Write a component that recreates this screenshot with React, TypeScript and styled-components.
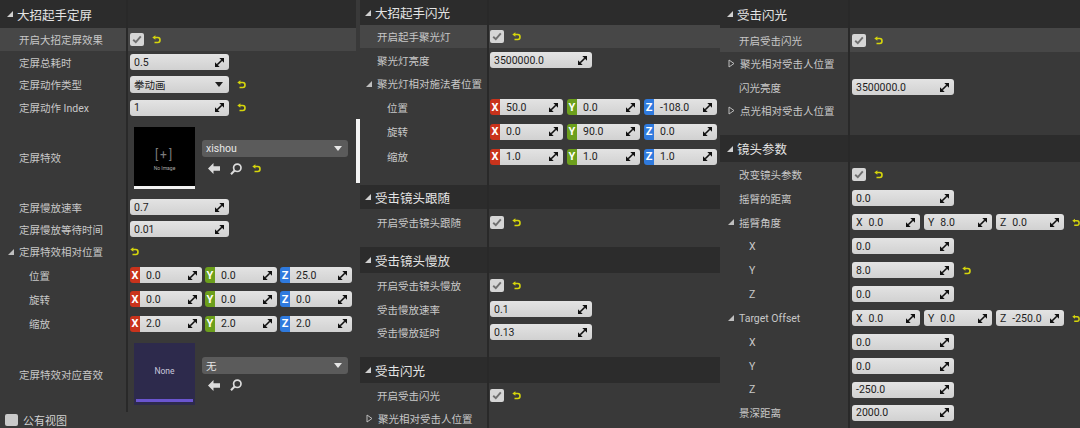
import React from "react";
import styled, { createGlobalStyle } from "styled-components";

const GlobalStyle = createGlobalStyle`
  html, body {
    margin: 0;
    padding: 0;
    background: #393939;
  }
  body {
    font-family: Roboto, "Noto Sans CJK SC", sans-serif;
  }
`;

const AXIS: Record<string, string> = {
  X: "#c9331c",
  Y: "#6c9f1c",
  Z: "#2f7ade",
};

const Screen = styled.div`
  display: flex;
  width: 1080px;
  height: 428px;
  overflow: hidden;
  background: #393939;
`;

const Panel = styled.div<{ $w: number; $lw: number; $lo: number; $ho: number; $vp: number }>`
  --lw: ${p => p.$lw}px;
  --lo: ${p => p.$lo}px;
  --ho: ${p => p.$ho}px;
  --vp: ${p => p.$vp}px;
  display: flex;
  flex-direction: column;
  flex: none;
  width: ${p => p.$w}px;
  height: 428px;
  overflow: hidden;
  background: #393939;
`;

const Divider = styled.div`
  display: flex;
  flex-direction: column;
  flex: none;
  width: 4px;
  background: #393939;
`;

const WhiteStrip = styled.div`
  margin-top: 119px;
  height: 64px;
  background: #f4f4f4;
`;

const Row = styled.div<{ $h: number; $hl?: boolean }>`
  display: grid;
  grid-template-columns: var(--lw) 1fr;
  flex: none;
  height: ${p => p.$h}px;
  background: ${p => (p.$hl ? "#474747" : "transparent")};
`;

const HeadRow = styled(Row)`
  background: #2c2c2c;
`;

const Name = styled.div<{ $nested?: boolean }>`
  display: flex;
  align-items: center;
  min-width: 0;
  padding-left: calc(var(--lo) + ${p => (p.$nested ? 10 : 0)}px);
  font-size: 10.5px;
  color: #c8c8c8;
  white-space: nowrap;
`;

const HeadName = styled(Name)`
  padding-left: var(--ho);
  font-size: 12.5px;
  color: #e4e4e4;
`;

const Twisty = styled.svg`
  flex: none;
  margin-left: -11px;
  margin-right: 5px;
`;

const HeadTwisty = styled(Twisty)`
  margin-left: -10px;
  margin-right: 4px;
`;

const Value = styled.div<{ $gap?: number }>`
  display: flex;
  align-items: center;
  gap: ${p => p.$gap ?? 8}px;
  min-width: 0;
  padding-left: var(--vp);
  border-left: 2px solid #292929;
`;

const NumBox = styled.div<{ $w: number }>`
  display: flex;
  align-items: center;
  justify-content: space-between;
  box-sizing: border-box;
  width: ${p => p.$w}px;
  height: 16px;
  padding: 0 5px 0 4px;
  border-radius: 3px;
  background: linear-gradient(#e3e3e3, #d1d1d1);
  font-size: 10.5px;
  color: #1c1c1c;
`;

const Combo = styled.div<{ $w: number; $dark?: boolean }>`
  display: flex;
  align-items: center;
  justify-content: space-between;
  box-sizing: border-box;
  width: ${p => p.$w}px;
  height: 17px;
  padding: 0 6px 0 4px;
  border-radius: 3px;
  background: ${p => (p.$dark ? "#5b5b5b" : "linear-gradient(#e3e3e3, #cfcfcf)")};
  font-size: 10.5px;
  color: ${p => (p.$dark ? "#e8e8e8" : "#1c1c1c")};
`;

const VecGroup = styled.div<{ $gap: number }>`
  display: flex;
  align-items: center;
  gap: ${p => p.$gap}px;
`;

const AxisPair = styled.div<{ $w: number }>`
  display: flex;
  width: ${p => p.$w}px;
  height: 16px;
`;

const AxisTag = styled.div<{ $c: string }>`
  display: flex;
  align-items: center;
  justify-content: center;
  flex: none;
  width: 10px;
  border-radius: 3px 0 0 3px;
  background: ${p => p.$c};
  color: #ffffff;
  font-size: 11px;
  font-weight: 700;
`;

const AxisBox = styled(NumBox)`
  flex: 1;
  width: auto;
  padding-left: 6px;
  border-radius: 0 3px 3px 0;
`;

const PlainAxisText = styled.span`
  display: flex;
  gap: 6px;
`;

const Check = styled.div<{ $size?: number; $bg?: string }>`
  display: flex;
  align-items: center;
  justify-content: center;
  flex: none;
  width: ${p => p.$size ?? 14}px;
  height: ${p => (p.$size ?? 14) - 1}px;
  border-radius: 2px;
  background: ${p => p.$bg ?? "#d6d6d6"};
`;

const Asset = styled.div`
  display: flex;
  align-items: center;
  gap: 7px;
  padding-left: 4px;
`;

const Thumb = styled.div<{ $bg: string }>`
  display: flex;
  flex-direction: column;
  flex: none;
  width: 61px;
  height: 62px;
  background: ${p => p.$bg};
`;

const ThumbBody = styled.div`
  display: flex;
  flex: 1;
  flex-direction: column;
  align-items: center;
  justify-content: center;
  gap: 3px;
`;

const ThumbBar = styled.div<{ $c: string; $mb: number }>`
  height: 3px;
  margin: 0 ${p => (p.$mb ? 2 : 0)}px ${p => p.$mb}px;
  background: ${p => p.$c};
`;

const PlusMark = styled.span`
  font-size: 12px;
  letter-spacing: 2px;
  color: #7c7c7c;
  margin-top: 6px;
`;

const TinyText = styled.span`
  font-size: 5px;
  color: #a8a8a8;
`;

const NoneText = styled.span`
  font-size: 8.5px;
  color: #c9c8dc;
`;

const AssetSide = styled.div`
  display: flex;
  flex-direction: column;
  gap: 5px;
`;

const AssetTools = styled.div`
  display: flex;
  align-items: center;
  gap: 10px;
  height: 13px;
  padding-left: 6px;
`;

const Footer = styled.div`
  display: flex;
  align-items: center;
  gap: 5px;
  height: 16px;
  padding-left: 5px;
  font-size: 11px;
  color: #d2d2d2;
`;

const Spin = () => (
  <svg width="9" height="9" viewBox="0 0 9 9">
    <path d="M4.3 0H9V4.7Z M0 4.3V9H4.7Z" fill="#101010" />
    <path d="M2.2 6.8L6.8 2.2" stroke="#101010" strokeWidth="1.6" />
  </svg>
);

const Undo = () => (
  <svg width="9" height="9" viewBox="0 -1 9 9">
    <path d="M3 1.5H5.8C7.3 1.5 8 2.6 8 4S7.3 6.5 5.8 6.5H2.5" fill="none" stroke="#d5d50c" strokeWidth="1.6" />
    <path d="M0.3 1.5L3.4 -0.8V3.8Z" fill="#d5d50c" />
  </svg>
);

const Tick = () => (
  <svg width="10" height="9" viewBox="0 0 10 9">
    <path d="M1.2 4.8L3.8 7.2L8.8 1.4" fill="none" stroke="#707070" strokeWidth="1.9" />
  </svg>
);

const DownArrow = ({ c }: { c: string }) => (
  <svg width="8" height="5" viewBox="0 0 8 5">
    <path d="M0 0H8L4 5Z" fill={c} />
  </svg>
);

const Back = () => (
  <svg width="12" height="11" viewBox="0 0 12 11">
    <path d="M0 5.5L5.5 0V3.3H12V7.7H5.5V11Z" fill="#dcdcdc" />
  </svg>
);

const Search = () => (
  <svg width="12" height="12" viewBox="0 0 12 12">
    <circle cx="7.3" cy="4.8" r="3.7" fill="none" stroke="#dcdcdc" strokeWidth="1.7" />
    <path d="M4.6 7.5L1 11.2" stroke="#dcdcdc" strokeWidth="2" />
  </svg>
);

const Open = () => (
  <Twisty width="6" height="6" viewBox="0 0 6 6">
    <path d="M6 0V6H0Z" fill="#bfbfbf" />
  </Twisty>
);

const Closed = () => (
  <Twisty width="7" height="9" viewBox="0 0 7 9">
    <path d="M1 1L6 4.5L1 8Z" fill="none" stroke="#bdbdbd" strokeWidth="1" />
  </Twisty>
);

const Header = ({ h, text }: { h: number; text: string }) => (
  <HeadRow $h={h}>
    <HeadName>
      <HeadTwisty width="6" height="6" viewBox="0 0 6 6">
        <path d="M6 0V6H0Z" fill="#cfcfcf" />
      </HeadTwisty>
      {text}
    </HeadName>
    <Value />
  </HeadRow>
);

const CheckRow = ({ h, label, hl }: { h: number; label: string; hl?: boolean }) => (
  <Row $h={h} $hl={hl}>
    <Name>{label}</Name>
    <Value>
      <Check><Tick /></Check>
      <Undo />
    </Value>
  </Row>
);

const NumRow = ({ h, label, v, w, undo, nested }: { h: number; label: string; v: string; w: number; undo?: boolean; nested?: boolean }) => (
  <Row $h={h}>
    <Name $nested={nested}>{label}</Name>
    <Value>
      <NumBox $w={w}><span>{v}</span><Spin /></NumBox>
      {undo && <Undo />}
    </Value>
  </Row>
);

const VecRow = ({ h, label, vals, w, gap }: { h: number; label: string; vals: string[]; w: number; gap: number }) => (
  <Row $h={h}>
    <Name $nested>{label}</Name>
    <Value>
      <VecGroup $gap={gap}>
        {["X", "Y", "Z"].map((a, i) => (
          <AxisPair key={a} $w={w}>
            <AxisTag $c={AXIS[a]}>{a}</AxisTag>
            <AxisBox $w={0}><span>{vals[i]}</span><Spin /></AxisBox>
          </AxisPair>
        ))}
      </VecGroup>
    </Value>
  </Row>
);

const PlainVecRow = ({ h, label, vals }: { h: number; label: string; vals: string[] }) => (
  <Row $h={h}>
    <Name><Open />{label}</Name>
    <Value>
      <VecGroup $gap={4}>
        {["X", "Y", "Z"].map((a, i) => (
          <NumBox key={a} $w={68}>
            <PlainAxisText><span>{a}</span><span>{vals[i]}</span></PlainAxisText>
            <Spin />
          </NumBox>
        ))}
      </VecGroup>
      <Undo />
    </Value>
  </Row>
);

const Gap = ({ h }: { h: number }) => (
  <Row $h={h}>
    <Name />
    <Value />
  </Row>
);

const FreezePanel = () => (
  <Panel $w={356} $lw={126} $lo={19} $ho={17} $vp={2}>
    <Header h={28} text="大招起手定屏" />
    <CheckRow h={23} hl label="开启大招定屏效果" />
    <NumRow h={22} label="定屏总耗时" v="0.5" w={99} />
    <Row $h={23}>
      <Name>定屏动作类型</Name>
      <Value>
        <Combo $w={99}><span>拳动画</span><DownArrow c="#1e1e1e" /></Combo>
        <Undo />
      </Value>
    </Row>
    <NumRow h={23} label="定屏动作 Index" v="1" w={99} undo />
    <Row $h={77}>
      <Name>定屏特效</Name>
      <Value>
        <Asset>
          <Thumb $bg="#000000">
            <ThumbBody>
              <PlusMark>[+]</PlusMark>
              <TinyText>No Image</TinyText>
            </ThumbBody>
            <ThumbBar $c="#f2f2f2" $mb={0} />
          </Thumb>
          <AssetSide>
            <Combo $w={146} $dark><span>xishou</span><DownArrow c="#e6e6e6" /></Combo>
            <AssetTools><Back /><Search /><Undo /></AssetTools>
          </AssetSide>
        </Asset>
      </Value>
    </Row>
    <NumRow h={22} label="定屏慢放速率" v="0.7" w={99} />
    <NumRow h={22} label="定屏慢放等待时间" v="0.01" w={99} />
    <Row $h={23}>
      <Name><Open />定屏特效相对位置</Name>
      <Value><Undo /></Value>
    </Row>
    <VecRow h={24} label="位置" vals={["0.0", "0.0", "25.0"]} w={72} gap={3} />
    <VecRow h={24} label="旋转" vals={["0.0", "0.0", "0.0"]} w={72} gap={3} />
    <VecRow h={25} label="缩放" vals={["2.0", "2.0", "2.0"]} w={72} gap={3} />
    <Row $h={76}>
      <Name>定屏特效对应音效</Name>
      <Value>
        <Asset>
          <Thumb $bg="#2d2a4c">
            <ThumbBody>
              <NoneText>None</NoneText>
            </ThumbBody>
            <ThumbBar $c="#6a55cf" $mb={3} />
          </Thumb>
          <AssetSide>
            <Combo $w={146} $dark><span>无</span><DownArrow c="#e6e6e6" /></Combo>
            <AssetTools><Back /><Search /></AssetTools>
          </AssetSide>
        </Asset>
      </Value>
    </Row>
    <Footer>
      <Check $size={13} $bg="#c9c9c9" />
      公有视图
    </Footer>
  </Panel>
);

const FlashPanel = () => (
  <Panel $w={360} $lw={127} $lo={17} $ho={15} $vp={1}>
    <Header h={25} text="大招起手闪光" />
    <CheckRow h={23} hl label="开启起手聚光灯" />
    <NumRow h={24} label="聚光灯亮度" v="3500000.0" w={102} />
    <Row $h={23}>
      <Name><Open />聚光灯相对施法者位置</Name>
      <Value />
    </Row>
    <VecRow h={24} label="位置" vals={["50.0", "0.0", "-108.0"]} w={73} gap={4} />
    <VecRow h={25} label="旋转" vals={["0.0", "90.0", "0.0"]} w={73} gap={4} />
    <VecRow h={25} label="缩放" vals={["1.0", "1.0", "1.0"]} w={73} gap={4} />
    <Gap h={16} />
    <Header h={24} text="受击镜头跟随" />
    <CheckRow h={27} label="开启受击镜头跟随" />
    <Gap h={11} />
    <Header h={26} text="受击镜头慢放" />
    <CheckRow h={25} label="开启受击镜头慢放" />
    <NumRow h={22} label="受击慢放速率" v="0.1" w={102} />
    <NumRow h={24} label="受击慢放延时" v="0.13" w={102} />
    <Gap h={13} />
    <Header h={26} text="受击闪光" />
    <CheckRow h={25} label="开启受击闪光" />
    <Row $h={20}>
      <Name><Closed />聚光相对受击人位置</Name>
      <Value />
    </Row>
  </Panel>
);

const CameraPanel = () => (
  <Panel $w={360} $lw={128} $lo={19} $ho={17} $vp={2}>
    <Header h={28} text="受击闪光" />
    <CheckRow h={24} hl label="开启受击闪光" />
    <Row $h={23}>
      <Name><Closed />聚光相对受击人位置</Name>
      <Value />
    </Row>
    <NumRow h={24} label="闪光亮度" v="3500000.0" w={102} />
    <Row $h={23}>
      <Name><Closed />点光相对受击人位置</Name>
      <Value />
    </Row>
    <Gap h={13} />
    <Header h={27} text="镜头参数" />
    <CheckRow h={24} label="改变镜头参数" />
    <NumRow h={24} label="摇臂的距离" v="0.0" w={102} />
    <PlainVecRow h={24} label="摇臂角度" vals={["0.0", "8.0", "0.0"]} />
    <NumRow h={24} nested label="X" v="0.0" w={102} />
    <NumRow h={24} nested label="Y" v="8.0" w={102} undo />
    <NumRow h={24} nested label="Z" v="0.0" w={102} />
    <PlainVecRow h={24} label="Target Offset" vals={["0.0", "0.0", "-250.0"]} />
    <NumRow h={24} nested label="X" v="0.0" w={102} />
    <NumRow h={24} nested label="Y" v="0.0" w={102} />
    <NumRow h={23} nested label="Z" v="-250.0" w={102} />
    <NumRow h={23} label="景深距离" v="2000.0" w={102} />
    <Gap h={4} />
  </Panel>
);

export default function App() {
  return (
    <>
      <GlobalStyle />
      <Screen>
        <FreezePanel />
        <Divider>
          <WhiteStrip />
        </Divider>
        <FlashPanel />
        <CameraPanel />
      </Screen>
    </>
  );
}
